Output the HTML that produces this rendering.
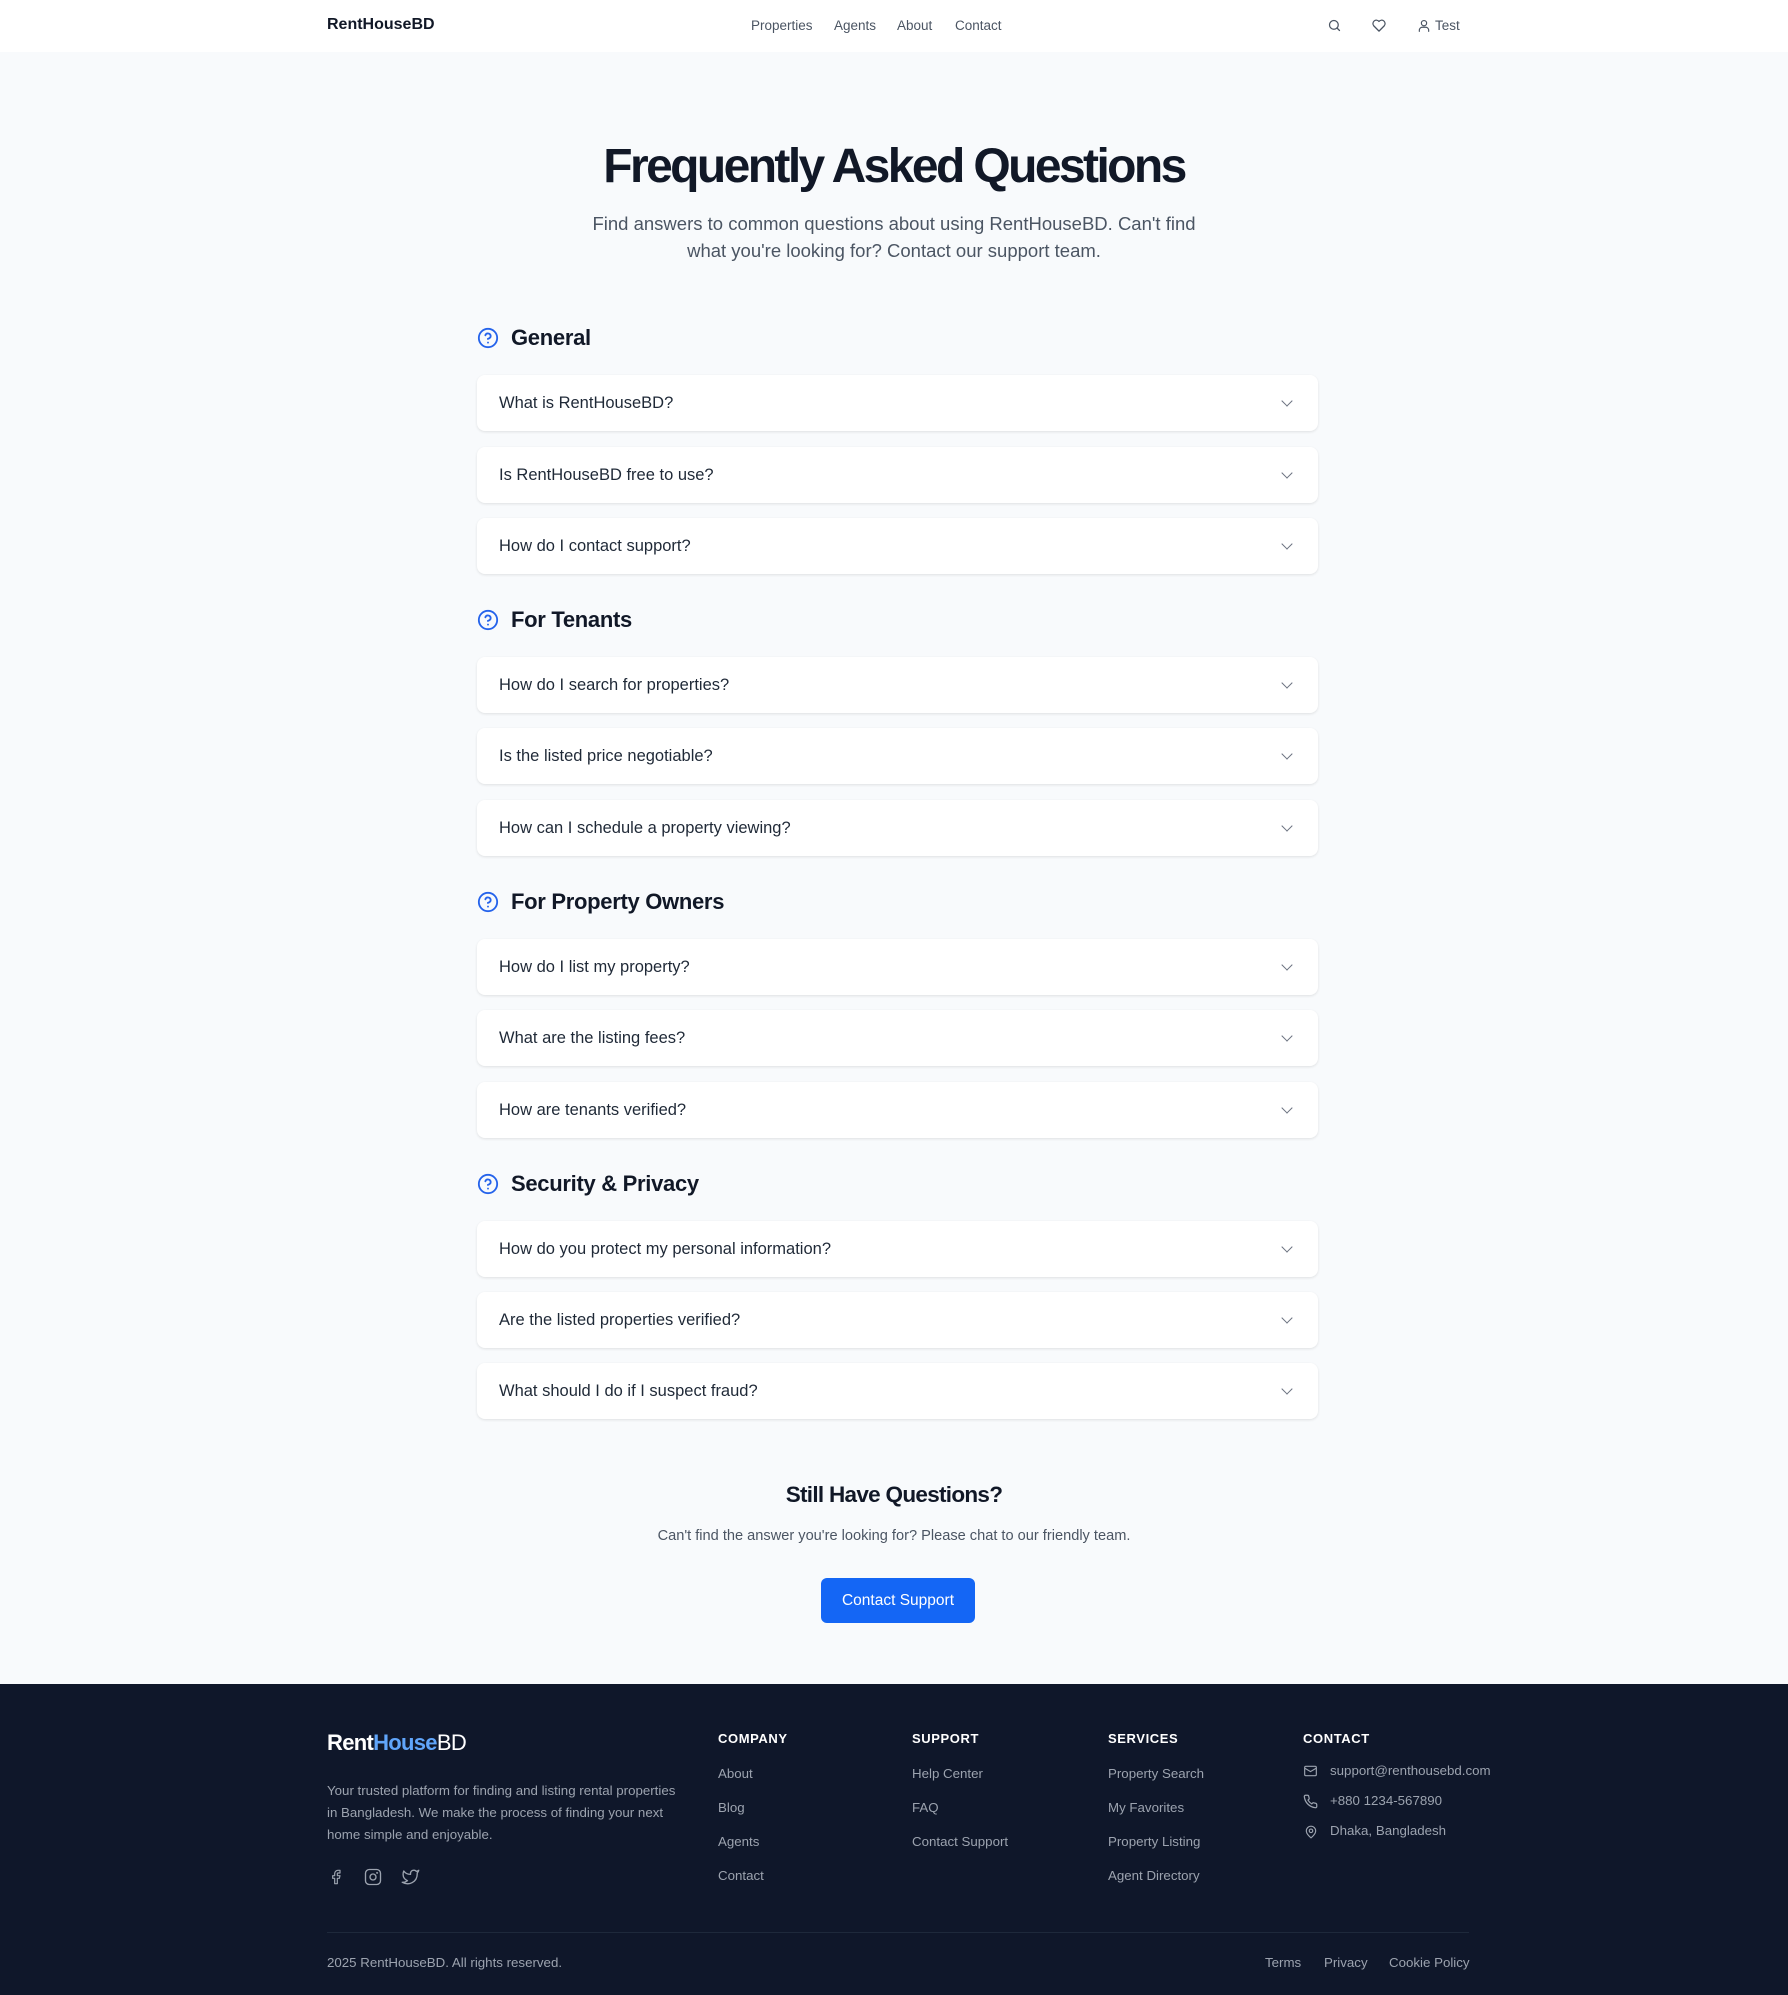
<!DOCTYPE html>
<html><head><meta charset="utf-8">
<style>
*{box-sizing:border-box;margin:0;padding:0}
body{width:1788px;height:1995px;background:#f8fafc;font-family:"Liberation Sans",Arial,sans-serif;color:#111827;position:relative;overflow:hidden}
.abs{position:absolute}
nav{position:absolute;left:0;top:0;width:1788px;height:52px;background:#fff}
.logo{left:327px;top:16px;font-size:16px;font-weight:bold;color:#111827}
.nl{top:18px;font-size:13.5px;color:#4b5563}
h1{position:absolute;left:0;width:1788px;top:139px;text-align:center;font-size:48px;font-weight:bold;letter-spacing:-2.6px;color:#111827}
.sub{left:0;width:1788px;top:210px;text-align:center;font-size:18.5px;line-height:27px;color:#4b5563}
.sec{left:477px;font-size:22px;font-weight:bold;color:#111827;display:flex;align-items:center;gap:12px;height:30px;letter-spacing:-.3px}
.card{left:477px;width:841px;height:56px;background:#fff;border-radius:8px;box-shadow:0 1px 3px rgba(0,0,0,.07),0 1px 2px rgba(0,0,0,.04);font-size:16.5px;color:#1f2937;padding:0 22px;display:flex;align-items:center;justify-content:space-between}
footer{position:absolute;left:0;top:1684px;width:1788px;height:311px;background:#0f172a;color:#9ca3af}
.fh{font-size:13px;font-weight:bold;color:#fff;letter-spacing:.6px}
.fl{font-size:13.3px;color:#9ca3af}
.chev{width:8px;height:8px;border-right:1.5px solid #6b7280;border-bottom:1.5px solid #6b7280;transform:rotate(45deg);margin-right:5px;margin-top:-4px}
</style></head><body>
<nav>
<div class="abs logo">RentHouseBD</div>
<div class="abs nl" style="left:751px">Properties</div>
<div class="abs nl" style="left:834px">Agents</div>
<div class="abs nl" style="left:897px">About</div>
<div class="abs nl" style="left:955px">Contact</div>
<svg class="abs" style="left:1327px;top:18px" width="15" height="15" viewBox="0 0 24 24" fill="none" stroke="#4b5563" stroke-width="2" stroke-linecap="round"><circle cx="11" cy="11" r="7"/><path d="M20 20l-4-4"/></svg>
<svg class="abs" style="left:1371px;top:18px" width="16" height="15" viewBox="0 0 24 24" fill="none" stroke="#4b5563" stroke-width="2" stroke-linejoin="round"><path d="M12 21l-8.5-8.6A5 5 0 0 1 12 5.5a5 5 0 0 1 8.5 6.9z"/></svg>
<svg class="abs" style="left:1417px;top:18px" width="14" height="15" viewBox="0 0 24 24" fill="none" stroke="#4b5563" stroke-width="2" stroke-linecap="round"><circle cx="12" cy="8" r="4.5"/><path d="M4 22v-2a5 5 0 0 1 5-5h6a5 5 0 0 1 5 5v2"/></svg>
<div class="abs nl" style="left:1435px">Test</div>
</nav>

<h1>Frequently Asked Questions</h1>
<div class="abs sub">Find answers to common questions about using RentHouseBD. Can't find<br>what you're looking for? Contact our support team.</div>

<div class="abs sec" style="top:323px"><svg width="22" height="22" viewBox="0 0 24 24" fill="none" stroke="#2563eb" stroke-width="2" stroke-linecap="round"><circle cx="12" cy="12" r="10"/><path d="M9.1 9a3 3 0 0 1 5.8 1c0 2-3 3-3 3"/><path d="M12 17h.01"/></svg>General</div>
<div class="abs card" style="top:375px">What is RentHouseBD?<span class="chev"></span></div>
<div class="abs card" style="top:447px">Is RentHouseBD free to use?<span class="chev"></span></div>
<div class="abs card" style="top:518px">How do I contact support?<span class="chev"></span></div>

<div class="abs sec" style="top:605px"><svg width="22" height="22" viewBox="0 0 24 24" fill="none" stroke="#2563eb" stroke-width="2" stroke-linecap="round"><circle cx="12" cy="12" r="10"/><path d="M9.1 9a3 3 0 0 1 5.8 1c0 2-3 3-3 3"/><path d="M12 17h.01"/></svg>For Tenants</div>
<div class="abs card" style="top:657px">How do I search for properties?<span class="chev"></span></div>
<div class="abs card" style="top:728px">Is the listed price negotiable?<span class="chev"></span></div>
<div class="abs card" style="top:800px">How can I schedule a property viewing?<span class="chev"></span></div>

<div class="abs sec" style="top:887px"><svg width="22" height="22" viewBox="0 0 24 24" fill="none" stroke="#2563eb" stroke-width="2" stroke-linecap="round"><circle cx="12" cy="12" r="10"/><path d="M9.1 9a3 3 0 0 1 5.8 1c0 2-3 3-3 3"/><path d="M12 17h.01"/></svg>For Property Owners</div>
<div class="abs card" style="top:939px">How do I list my property?<span class="chev"></span></div>
<div class="abs card" style="top:1010px">What are the listing fees?<span class="chev"></span></div>
<div class="abs card" style="top:1082px">How are tenants verified?<span class="chev"></span></div>

<div class="abs sec" style="top:1169px"><svg width="22" height="22" viewBox="0 0 24 24" fill="none" stroke="#2563eb" stroke-width="2" stroke-linecap="round"><circle cx="12" cy="12" r="10"/><path d="M9.1 9a3 3 0 0 1 5.8 1c0 2-3 3-3 3"/><path d="M12 17h.01"/></svg>Security &amp; Privacy</div>
<div class="abs card" style="top:1221px">How do you protect my personal information?<span class="chev"></span></div>
<div class="abs card" style="top:1292px">Are the listed properties verified?<span class="chev"></span></div>
<div class="abs card" style="top:1363px">What should I do if I suspect fraud?<span class="chev"></span></div>

<div class="abs" style="left:0;width:1788px;top:1482px;text-align:center;font-size:22.5px;font-weight:bold;color:#111827;letter-spacing:-.7px">Still Have Questions?</div>
<div class="abs" style="left:0;width:1788px;top:1528px;text-align:center;font-size:14.6px;color:#4b5563">Can't find the answer you're looking for? Please chat to our friendly team.</div>
<div class="abs" style="left:821px;top:1578px;width:154px;height:45px;background:#1466f5;border-radius:6px;color:#fff;font-size:15.5px;display:flex;align-items:center;justify-content:center">Contact Support</div>

<footer>
<div class="abs" style="left:327px;top:46px;font-size:22px;font-weight:bold;color:#fff;letter-spacing:-.7px">Rent<span style="color:#60a5fa">House</span><span style="font-weight:normal">BD</span></div>
<div class="abs" style="left:327px;top:96px;width:355px;font-size:13.3px;line-height:22px;color:#9ca3af">Your trusted platform for finding and listing rental properties in Bangladesh. We make the process of finding your next home simple and enjoyable.</div>
<svg class="abs" style="left:328px;top:184px" width="16" height="18" viewBox="0 0 24 24" fill="none" stroke="#9ca3af" stroke-width="1.8" stroke-linejoin="round"><path d="M18 2h-3a5 5 0 0 0-5 5v3H7v4h3v8h4v-8h3l1-4h-4V7a1 1 0 0 1 1-1h3z"/></svg>
<svg class="abs" style="left:364px;top:184px" width="18" height="18" viewBox="0 0 24 24" fill="none" stroke="#9ca3af" stroke-width="1.8"><rect x="2" y="2" width="20" height="20" rx="5"/><circle cx="12" cy="12" r="4"/><circle cx="17.5" cy="6.5" r=".5"/></svg>
<svg class="abs" style="left:401px;top:184px" width="19" height="18" viewBox="0 0 24 24" fill="none" stroke="#9ca3af" stroke-width="1.8" stroke-linejoin="round"><path d="M23 3a10.9 10.9 0 0 1-3.1 1.5 4.5 4.5 0 0 0-7.9 3v1A10.7 10.7 0 0 1 3 4s-4 9 5 13a11.6 11.6 0 0 1-7 2c9 5 20 0 20-11.5a4.5 4.5 0 0 0-.1-.8A7.7 7.7 0 0 0 23 3z"/></svg>

<div class="abs fh" style="left:718px;top:47px">COMPANY</div>
<div class="abs fl" style="left:718px;top:82px">About</div>
<div class="abs fl" style="left:718px;top:116px">Blog</div>
<div class="abs fl" style="left:718px;top:150px">Agents</div>
<div class="abs fl" style="left:718px;top:184px">Contact</div>

<div class="abs fh" style="left:912px;top:47px">SUPPORT</div>
<div class="abs fl" style="left:912px;top:82px">Help Center</div>
<div class="abs fl" style="left:912px;top:116px">FAQ</div>
<div class="abs fl" style="left:912px;top:150px">Contact Support</div>

<div class="abs fh" style="left:1108px;top:47px">SERVICES</div>
<div class="abs fl" style="left:1108px;top:82px">Property Search</div>
<div class="abs fl" style="left:1108px;top:116px">My Favorites</div>
<div class="abs fl" style="left:1108px;top:150px">Property Listing</div>
<div class="abs fl" style="left:1108px;top:184px">Agent Directory</div>

<div class="abs fh" style="left:1303px;top:47px">CONTACT</div>
<svg class="abs" style="left:1303px;top:80px" width="15" height="14" viewBox="0 0 24 24" fill="none" stroke="#9ca3af" stroke-width="2"><rect x="2" y="4" width="20" height="16" rx="2"/><path d="M22 7l-10 6L2 7"/></svg>
<div class="abs fl" style="left:1330px;top:79px">support@renthousebd.com</div>
<svg class="abs" style="left:1303px;top:110px" width="15" height="15" viewBox="0 0 24 24" fill="none" stroke="#9ca3af" stroke-width="2" stroke-linejoin="round"><path d="M22 16.9v3a2 2 0 0 1-2.2 2A19.8 19.8 0 0 1 2.1 4.2 2 2 0 0 1 4.1 2h3a2 2 0 0 1 2 1.7c.1.9.4 1.8.7 2.7a2 2 0 0 1-.5 2.1L8 9.8a16 16 0 0 0 6 6l1.3-1.3a2 2 0 0 1 2.1-.4c.9.3 1.800.6 2.7.7a2 2 0 0 1 1.7 2z"/></svg>
<div class="abs fl" style="left:1330px;top:109px">+880 1234-567890</div>
<svg class="abs" style="left:1304px;top:140px" width="14" height="16" viewBox="0 0 24 24" fill="none" stroke="#9ca3af" stroke-width="2"><path d="M20 10c0 6-8 12-8 12s-8-6-8-12a8 8 0 0 1 16 0z"/><circle cx="12" cy="10" r="3"/></svg>
<div class="abs fl" style="left:1330px;top:139px">Dhaka, Bangladesh</div>

<div class="abs" style="left:327px;top:248px;width:1142px;height:1px;background:#1e293b"></div>
<div class="abs fl" style="left:327px;top:271px">2025 RentHouseBD. All rights reserved.</div>
<div class="abs fl" style="left:1265px;top:271px">Terms</div>
<div class="abs fl" style="left:1324px;top:271px">Privacy</div>
<div class="abs fl" style="left:1389px;top:271px">Cookie Policy</div>
</footer>
</body></html>
